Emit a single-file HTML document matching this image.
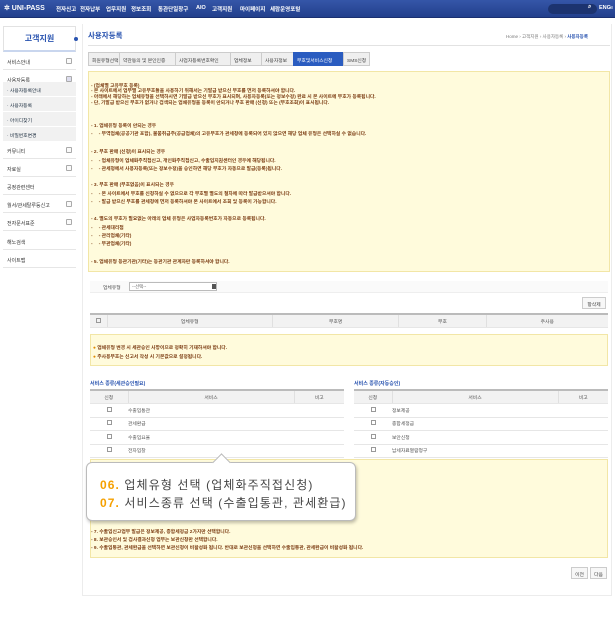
<!DOCTYPE html>
<html><head><meta charset="utf-8"><style>
*{margin:0;padding:0;box-sizing:border-box}
body{width:615px;height:627px;background:#fff;position:relative;overflow:hidden;font-family:"Liberation Sans","Noto Sans CJK KR",sans-serif;color:#333}
.a{position:absolute}
.top{left:0;top:0;width:615px;height:18px;background:linear-gradient(#3556a8,#223f8c);border-bottom:1px solid #1a3070}
.top span{position:absolute;top:5px;color:#fff;font-size:5.5px;font-weight:bold;white-space:nowrap}
.side{left:3px;width:73px;background:#fff;border:1px solid #e2e2e2}
.sr{position:absolute;left:3px;width:73px;height:17px;border-bottom:1px solid #e6e6e6;background:#fff;font-size:5px;padding:6px 4px;color:#333}
.sr i{position:absolute;right:4px;top:5px;width:6px;height:6px;border:1px solid #aaa;border-radius:1px;background:#fafafa}
.ss{position:absolute;left:3px;width:73px;height:15px;background:#f1f1f1;border-bottom:1px solid #fff;font-size:4.8px;padding:5px 4px;color:#234}
.yl{background:#fffbdc;border:1px solid #f2e6a6}
.t{position:absolute;font-size:4.8px;color:#7a3a10;white-space:nowrap;font-weight:bold}
.tab{position:absolute;top:52px;height:14px;background:#efefef;border:1px solid #ccc;font-size:4.8px;padding:4px 3px;color:#444;white-space:nowrap}
table{border-collapse:collapse;font-size:4.8px;color:#555;position:absolute}
td,th{border-bottom:1px solid #e6e6e6;height:13.5px;font-weight:normal;text-align:center}
th{background:#f2f2f2;border-right:1px solid #e0e0e0}
.cb{display:inline-block;width:5px;height:5px;border:1px solid #999}
.btn{position:absolute;height:12px;border:1px solid #ccc;background:#f7f7f7;font-size:4.8px;text-align:center;padding-top:3px;color:#444}
</style></head><body>
<div class="a top">
<span style="left:4px;top:4px;font-size:7px">✲ UNI-PASS</span>
<span style="left:56px">전자신고</span><span style="left:80px">전자납부</span><span style="left:106px">업무지원</span><span style="left:131px">정보조회</span><span style="left:158px">통관단일창구</span><span style="left:196px">AIO</span><span style="left:212px">고객지원</span><span style="left:240px">마이페이지</span><span style="left:270px">세람운영포털</span>
<div class="a" style="left:548px;top:4px;width:49px;height:10px;border-radius:5px;background:#1c336f"></div>
<span style="left:588px;top:4px;font-size:6px">⌕</span><span style="left:599px">ENG</span><span style="left:610px">≡</span>
</div>
<div class="a side" style="top:26px;height:26px;border-bottom:2px solid #c9d6ee"></div>
<div class="a" style="left:3px;top:33px;width:73px;text-align:center;font-size:8px;color:#2a54b0;font-weight:bold">고객지원</div>
<div class="a" style="left:74px;top:37px;width:4px;height:4px;background:#2a54b0;border-radius:2px"></div>
<div class="sr" style="top:53px">서비스안내<i></i></div>
<div class="sr" style="top:71px">사용자등록<i style="background:#dde"></i></div>
<div class="ss" style="top:82px">· 사용자등록안내</div>
<div class="ss" style="top:97px">· 사용자등록</div>
<div class="ss" style="top:112px">· 아이디찾기</div>
<div class="ss" style="top:127px">· 비밀번호변경</div>
<div class="sr" style="top:142px">커뮤니티<i></i></div>
<div class="sr" style="top:160px">자료실<i></i></div>
<div class="sr" style="top:178px">공정관련센터</div>
<div class="sr" style="top:196px">월서/관세탈루등신고<i></i></div>
<div class="sr" style="top:214px">전자문서표준<i></i></div>
<div class="sr" style="top:233px">해노검색</div>
<div class="sr" style="top:251px">사이트맵</div>
<div class="a" style="left:82px;top:24px;width:530px;height:572px;border:1px solid #ececec;border-top:none"></div>
<div class="a" style="left:88px;top:30px;font-size:7.5px;font-weight:bold;color:#2a54b0">사용자등록</div>
<div class="a" style="left:506px;top:34px;font-size:4.5px;color:#777;white-space:nowrap">Home › 고객지원 › 사용자등록 › <b style="color:#2a54b0">사용자등록</b></div>
<div class="a" style="left:88px;top:45px;width:522px;height:1px;background:#e2e2e2"></div>
<div class="tab" style="left:88px;width:32px">회원유형선택</div>
<div class="tab" style="left:119px;width:57px">약관동의 및 본인인증</div>
<div class="tab" style="left:175px;width:56px">사업자등록번호확인</div>
<div class="tab" style="left:230px;width:32px">업체정보</div>
<div class="tab" style="left:261px;width:33px">사용자정보</div>
<div class="tab" style="left:293px;width:52px;background:#2a5cc0;color:#fff;border-color:#2a5cc0">부호및서비스신청</div>
<div class="tab" style="left:343px;width:27px">SMS신청</div>
<div class="a yl" style="left:88px;top:71px;width:522px;height:201px"></div>
<div class="t" style="left:91px;top:82px">- (업체별 고유부호 등록)</div>
<div class="t" style="left:91px;top:87px">- 본 사이트에서 업무별 고유부호들을 사용하기 위해서는 기발급 받으신 부호를 먼저 등록하셔야 합니다.</div>
<div class="t" style="left:91px;top:93px">- 아래에서 해당하는 업체유형을 선택하시면 기발급 받으신 부호가 표시되며, 사용자등록(또는 정보수정) 완료 시 본 사이트에 부호가 등록됩니다.</div>
<div class="t" style="left:91px;top:99px">- 단, 기발급 받으신 부호가 없거나 검색되는 업체유형을 등록이 안되거나 부호 판매 (신청) 또는 (부호조회)이 표시됩니다.</div>
<div class="t" style="left:91px;top:122px">- 1. 업체유형 등록이 안되는 경우</div>
<div class="t" style="left:91px;top:130px">-　 - 무역업체(공공기관 포함), 물품취급주(공급업체)의 고유부호가 관세청에 등록되어 있지 않으면 해당 업체 유형은 선택하실 수 없습니다.</div>
<div class="t" style="left:91px;top:148px">- 2. 부호 판매 (신청)이 표시되는 경우</div>
<div class="t" style="left:91px;top:157px">-　 - 업체유형이 업체화주직접신고, 개인화주직접신고, 수출입지원센터인 경우에 해당됩니다.</div>
<div class="t" style="left:91px;top:165px">-　 - 관세청에서 사용자등록(또는 정보수정)을 승인하면 해당 부호가 자동으로 발급(등록)됩니다.</div>
<div class="t" style="left:91px;top:181px">- 3. 부호 판매 (부호없음)이 표시되는 경우</div>
<div class="t" style="left:91px;top:190px">-　 - 본 사이트에서 부호를 신청하실 수 없으므로 각 부호별 별도의 절차에 따라 발급받으셔야 합니다.</div>
<div class="t" style="left:91px;top:198px">-　 - 발급 받으신 부호를 관세청에 먼저 등록하셔야 본 사이트에서 조회 및 등록이 가능합니다.</div>
<div class="t" style="left:91px;top:215px">- 4. 별도의 부호가 필요없는 아래의 업체 유형은 사업자등록번호가 자동으로 등록됩니다.</div>
<div class="t" style="left:91px;top:224px">-　 - 관세대리점</div>
<div class="t" style="left:91px;top:232px">-　 - 관리업체(기타)</div>
<div class="t" style="left:91px;top:240px">-　 - 무관업체(기타)</div>
<div class="t" style="left:91px;top:258px">- 5. 업체유형 등관기관(기타)는 등관기관 관계자만 등록하셔야 합니다.</div>
<div class="a" style="left:90px;top:281px;width:518px;height:12px;border-bottom:1px solid #eee;background:#fafafa"></div>
<div class="a" style="left:103px;top:284px;font-size:4.8px;color:#555">업체유형</div>
<div class="a" style="left:129px;top:282px;width:88px;height:9px;border:1px solid #bbb;background:#fff;font-size:4.5px;padding:1px 2px;color:#666">--선택--</div>
<div class="a" style="left:212px;top:284px;width:4px;height:5px;background:#555"></div>
<div class="btn" style="left:582px;top:297px;width:24px">항삭제</div>
<table style="left:90px;top:313px;width:518px;border-top:2px solid #bbb">
<tr><th style="width:17px"><span class="cb"></span></th><th>업체유형</th><th>부호명</th><th>부호</th><th style="border-right:none">주사용</th></tr></table>
<div class="a yl" style="left:90px;top:334px;width:518px;height:32px"></div>
<div class="t" style="left:93px;top:344px"><span style="color:#e08a00">●</span> 업체유형 변경 시 세관승인 사항이므로 정확히 기재하셔야 합니다.</div>
<div class="t" style="left:93px;top:353px"><span style="color:#e08a00">●</span> 주사용부호는 신고서 작성 시 기본값으로 설정됩니다.</div>
<div class="a" style="left:90px;top:380px;font-size:5px;color:#2a54b0;font-weight:bold">서비스 종류(세관승인필요)</div>
<div class="a" style="left:354px;top:380px;font-size:5px;color:#2a54b0;font-weight:bold">서비스 종류(자동승인)</div>
<table style="left:90px;top:389px;width:254px;border-top:2px solid #bbb">
<tr><th style="width:38px">신청</th><th>서비스</th><th style="width:50px;border-right:none">비고</th></tr>
<tr><td><span class="cb"></span></td><td style="text-align:left">수출입통관</td><td></td></tr>
<tr><td><span class="cb"></span></td><td style="text-align:left">관세환급</td><td></td></tr>
<tr><td><span class="cb"></span></td><td style="text-align:left">수출입요율</td><td></td></tr>
<tr><td><span class="cb"></span></td><td style="text-align:left">전자입찰</td><td></td></tr></table>
<table style="left:354px;top:389px;width:254px;border-top:2px solid #bbb">
<tr><th style="width:38px">신청</th><th>서비스</th><th style="width:50px;border-right:none">비고</th></tr>
<tr><td><span class="cb"></span></td><td style="text-align:left">정보제공</td><td></td></tr>
<tr><td><span class="cb"></span></td><td style="text-align:left">종합세정금</td><td></td></tr>
<tr><td><span class="cb"></span></td><td style="text-align:left">보안신청</td><td></td></tr>
<tr><td><span class="cb"></span></td><td style="text-align:left">납세자료열람청구</td><td></td></tr></table>
<div class="a yl" style="left:90px;top:459px;width:518px;height:99px"></div>
<div class="t" style="left:91px;top:528px">- 7. 수출입신고업무 발급은 정보제공, 종합세정금 2가지만 선택합니다.</div>
<div class="t" style="left:91px;top:536px">- 8. 보관승인서 및 검사결과신청 업무는 보관신청만 선택합니다.</div>
<div class="t" style="left:91px;top:544px">- 9. 수출입통관, 관세환급을 선택하면 보관신청이 비활성화 됩니다. 반대로 보관신청을 선택하면 수출입통관, 관세환급이 비활성화 됩니다.</div>
<div class="btn" style="left:571px;top:567px;width:17px">이전</div>
<div class="btn" style="left:590px;top:567px;width:17px">다음</div>
<div class="a" style="left:86px;top:462px;width:270px;height:59px;background:#fff;border:1px solid #bbb;border-radius:6px;box-shadow:1px 2px 3px rgba(0,0,0,.25)"></div>
<div class="a" style="left:215px;top:456px;width:13px;height:13px;background:#fff;border-left:1px solid #bbb;border-top:1px solid #bbb;transform:rotate(45deg)"></div>
<div class="a" style="left:100px;top:476px;font-size:12px;color:#444;white-space:nowrap;letter-spacing:1.1px"><b style="color:#f5a000">06.</b> 업체유형 선택 (업체화주직접신청)</div>
<div class="a" style="left:100px;top:494px;font-size:12px;color:#444;white-space:nowrap;letter-spacing:1.1px"><b style="color:#f5a000">07.</b> 서비스종류 선택 (수출입통관, 관세환급)</div>
</body></html>
